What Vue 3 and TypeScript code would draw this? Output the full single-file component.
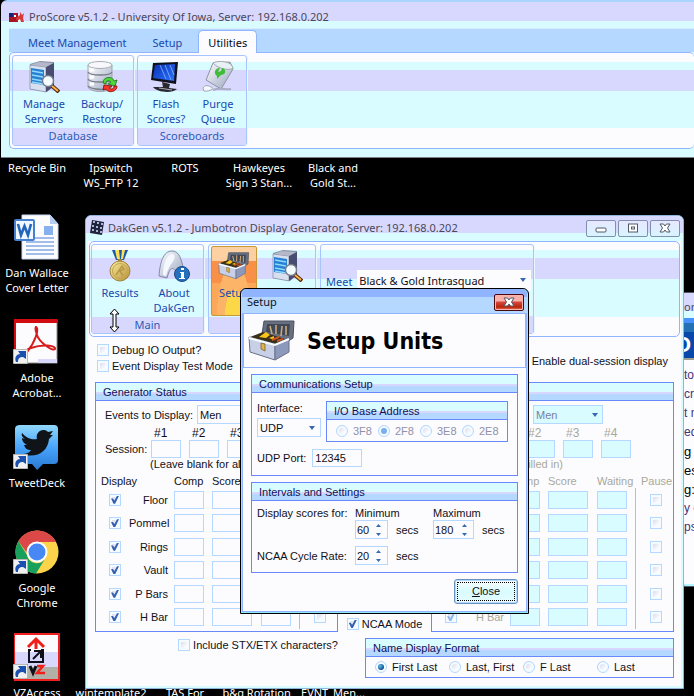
<script setup lang="ts">
import { reactive, ref } from 'vue'

interface Shortcut { label: string; icon?: string; linked?: boolean }
interface GeneratorPanel {
  id: string
  title: string
  disabled: boolean
  division: string
  note: string
  sessions: string[]
  events: { name: string; shown: boolean; paused: boolean }[]
}

const eventNames = ['Floor', 'Pommel', 'Rings', 'Vault', 'P Bars', 'H Bar']

const shortcuts: Shortcut[] = [
  { label: 'Recycle Bin' },
  { label: 'Ipswitch WS_FTP 12' },
  { label: 'ROTS' },
  { label: 'Hawkeyes Sign 3 Stan...' },
  { label: 'Black and Gold St...' },
  { label: 'Dan Wallace Cover Letter', icon: 'word' },
  { label: '' }, { label: '' }, { label: '' }, { label: '' },
  { label: 'Adobe Acrobat...', icon: 'acrobat', linked: true },
  { label: 'Calculator' }, { label: '' }, { label: '' }, { label: '' },
  { label: 'TweetDeck', icon: 'tweet', linked: true },
  { label: '' }, { label: '' }, { label: '' }, { label: '' },
  { label: 'Google Chrome', icon: 'chrome', linked: true },
  { label: '' }, { label: '' }, { label: '' }, { label: '' },
  { label: 'VZAccess', icon: 'vz', linked: true },
  { label: 'wintemplate2' },
  { label: 'TAS For' },
  { label: 'b&g Rotation_' },
  { label: 'EVNT_Men...' },
]

const tabs = ['Meet Management', 'Setup', 'Utilities']
const activeTab = ref('Utilities')

const proGroups = [
  { name: 'Database', items: [{ text: 'Manage Servers', icon: 'server' }, { text: 'Backup/ Restore', icon: 'database' }] },
  { name: 'Scoreboards', items: [{ text: 'Flash Scores?', icon: 'monitor' }, { text: 'Purge Queue', icon: 'bin' }] },
]

const panels = reactive<GeneratorPanel[]>([
  {
    id: 'one', title: 'Generator Status', disabled: false, division: 'Men',
    note: '(Leave blank for all)', sessions: ['', '', '', ''],
    events: eventNames.map((name) => ({ name, shown: true, paused: false })),
  },
  {
    id: 'two', title: 'Generator Status', disabled: true, division: 'Men',
    note: '(Ignored unless filled in)', sessions: ['', '', '', ''],
    events: eventNames.map((name) => ({ name, shown: true, paused: false })),
  },
])

const options = reactive({ debug: false, test: false, dual: false, ncaa: true, stx: false })
const nameFormats = ['First Last', 'Last, First', 'F Last', 'Last']
const nameFormat = ref('First Last')

const meet = ref('Black & Gold Intrasquad')
const setup = reactive({ iface: 'UDP', address: '2F8', port: '12345', min: 60, max: 180, cycle: 20 })
const addresses = ['3F8', '2F8', '3E8', '2E8']
const dialogOpen = ref(true)

const pageLines = [
  { text: 'to', tone: 'link' }, { text: 'cr', tone: 'link' }, { text: 't m', tone: 'link' },
  { text: 'ed', tone: 'link' }, { text: 'g', tone: 'strong' }, { text: 'es:', tone: 'strong' },
  { text: 'g:', tone: 'strong' }, { text: 'y c', tone: 'link' }, { text: 'ps', tone: 'link' },
]
</script>

<template>
  <main class="desktop">
    <svg class="symbols" aria-hidden="true">
      <defs>
        <linearGradient id="steel" x1="0" y1="0" x2="1" y2="1">
          <stop offset="0" stop-color="#fff" /><stop offset="1" stop-color="#98a4c0" />
        </linearGradient>
        <linearGradient id="gold" x1="0" y1="0" x2="1" y2="1">
          <stop offset="0" stop-color="#fcf0a0" /><stop offset="1" stop-color="#b48c38" />
        </linearGradient>
        <linearGradient id="screen" x1="0" y1="0" x2="1" y2="1">
          <stop offset="0" stop-color="#0830b4" /><stop offset="1" stop-color="#2c74ff" />
        </linearGradient>
        <linearGradient id="sky" x1="0" y1="0" x2="0" y2="1">
          <stop offset="0" stop-color="#90d8fc" /><stop offset=".5" stop-color="#48a4fc" /><stop offset="1" stop-color="#2878d0" />
        </linearGradient>
        <symbol id="i-server" viewBox="0 0 32 32">
          <path d="M2 3 L12 0 L26 1 L26 25 L19 31 L2 28Z" fill="#8890a8" />
          <path d="M2 4 L18 6 V31 L2 28Z" fill="#d8e0f0" stroke="#707890" stroke-width=".6" />
          <path d="M18 6 L26 2 V25 L18 31Z" fill="#484c70" />
          <path d="M2 4 L11 1 L25 2 L18 6Z" fill="#b4b8c8" />
          <path d="M3 7 L16 9 V24 L3 22Z" fill="#2880d0" />
          <path d="M4 10 L15 12 M4 14 L15 16 M4 18 L15 20 M4 21 L15 23" stroke="#90d8fc" stroke-width="1.4" />
          <path d="M24 25 L31 31" stroke="#502810" stroke-width="4" />
          <path d="M24 25 L30 30" stroke="#fcb448" stroke-width="2" />
          <circle cx="20" cy="20" r="5.5" fill="#f4fcff" stroke="#787c88" stroke-width="1.4" />
        </symbol>
        <symbol id="i-database" viewBox="0 0 32 32">
          <path d="M2 4 V26 C4 32 24 32 26 26 V4Z" fill="url(#steel)" stroke="#a0a4ac" />
          <ellipse cx="14" cy="4" rx="12" ry="3.5" fill="#f8f8fc" stroke="#a8acb4" />
          <path d="M2 11 C4 15 24 15 26 11 M2 18 C4 22 24 22 26 18 M2 25 C4 28 16 29 18 28" fill="none" stroke="#787c88" stroke-width="1.3" />
          <path d="M4 9 H8 M4 16 H8 M4 23 H8" stroke="#fff" stroke-width="3" />
          <path d="M17 22 C17 15 27 15 28 20 L31 19 L29 25 L22 23 L25 21 C23 19 20 19 20 23Z" fill="#50d838" stroke="#187018" stroke-width=".8" />
          <path d="M31 25 C31 32 21 32 20 28 L17 29 L18 24 L26 25 L23 27 C25 29 28 28 28 25Z" fill="#f43828" stroke="#800808" stroke-width=".8" />
        </symbol>
        <symbol id="i-monitor" viewBox="0 0 32 32">
          <path d="M3 2 L28 1 L26 23 L1 19Z" fill="#10101c" />
          <path d="M5 4 L25 3 L24 20 L3 17Z" fill="url(#screen)" />
          <path d="M10 4 L16 18 M15 4 L21 19 M20 4 L24 14" stroke="#88b8ff" stroke-width=".8" />
          <path d="M12 21 L20 23 L19 27 L27 28 C22 33 6 31 3 26 L13 26Z" fill="#282830" />
          <path d="M9 27 L22 29" stroke="#a8acb8" />
        </symbol>
        <symbol id="i-bin" viewBox="0 0 32 32">
          <path d="M11 2 L28 1 L31 8 L19 28 L4 19Z" fill="url(#steel)" stroke="#8c949c" />
          <path d="M11 2 C16 -1 30 0 31 7 C28 10 16 8 11 2Z" fill="#e8f0f4" stroke="#a0a8b0" />
          <path d="M18 7 C13 7 11 12 15 15 L15 18 L19 14 C24 14 25 8 20 7 L19 10 L16 11Z" fill="#40bc38" />
          <path d="M1 27 C3 23 7 25 9 26 C13 27 8 31 2 30Z" fill="#f4f8fc" stroke="#a0a8b0" />
          <path d="M11 29 C18 26 23 29 29 28" fill="none" stroke="#a8acc4" stroke-width="2" />
        </symbol>
        <symbol id="i-medal" viewBox="0 0 32 32">
          <path d="M8 0 H24 L20 10 H12Z" fill="#1c58a8" /><path d="M11 0 H15 L16 9 H13Z M18 0 H21 L19 9 H17Z" fill="#fce058" />
          <path d="M14 9 H18 V14 H14Z" fill="#a88838" />
          <circle cx="16" cy="21" r="10" fill="url(#gold)" stroke="#a08440" />
          <circle cx="16" cy="21" r="7.5" fill="none" stroke="#c8a450" />
          <path d="M12 25 L18 16 L20 19 L16 21 L19 26" fill="none" stroke="#b89848" stroke-width="1.5" />
        </symbol>
        <symbol id="i-info" viewBox="0 0 32 32">
          <path d="M1 26 C2 13 5 1 14 1 C22 1 23 10 26 20 L19 23 C15 16 12 17 9 28Z" fill="url(#steel)" stroke="#8088a8" />
          <path d="M5 25 C5 14 9 4 14 4 C18 4 17 9 14 13 C11 16 9 22 8 26Z" fill="#f4f8ff" />
          <circle cx="24" cy="24" r="7.5" fill="#2470bc" stroke="#184888" />
          <path d="M22 22 H26 V28 H27 V29 H21 V28 H23 V23 H22Z M23 18 H26 V20 H23Z" fill="#fff" />
        </symbol>
        <symbol id="i-toolbox" viewBox="0 0 48 42">
          <path d="M16 1 L46 1 L45 18 L39 22 L14 14Z" fill="#687080" stroke="#485060" />
          <path d="M19 4 L42 4 L41 16 L18 12Z" fill="#404858" />
          <path d="M22 6 L24 14 M28 5 V14 M34 6 L33 16 M38 6 V15" stroke="#c8a878" stroke-width="1.6" />
          <path d="M2 17 L15 12 L40 20 L28 26Z" fill="#383018" />
          <path d="M11 17 L18 12 L22 15 L18 18Z M21 18 L26 16 V20Z" fill="#fcc418" />
          <path d="M24 20 L31 17 M29 21 L35 19" stroke="#c85828" stroke-width="2" />
          <path d="M1 17 L27 24 V40 L2 32Z" fill="#c8d0e8" stroke="#687088" />
          <path d="M27 24 L41 18 V32 L27 40Z" fill="#8c98bc" stroke="#687088" />
          <path d="M1 18 L27 25 L41 19" fill="none" stroke="#f8fcff" stroke-width="2" />
          <path d="M13 23 L17 24 V31 L13 29Z" fill="#dcb450" stroke="#806020" stroke-width=".8" />
        </symbol>
        <symbol id="i-word" viewBox="0 0 48 48">
          <path d="M8 2 H36 L44 11 V46 H8Z" fill="#fcfcff" stroke="#c8d8f4" /><path d="M36 2 V11 H44Z" fill="#b4ccf0" />
          <path d="M12 29 H40 M12 33 H40 M12 37 H40 M12 41 H40" stroke="#84a8e4" stroke-width="1.5" />
          <rect x="30" y="13" width="9" height="9" fill="#88b0ec" />
          <path d="M12 25 H40" stroke="#84a8e4" stroke-width="1.5" />
          <rect x="1" y="7" width="19" height="20" rx="1" fill="#f0f8ff" stroke="#4880d0" stroke-width="2" />
          <path d="M4 11 L7 22 L10.500 13 L14 22 L17 11" fill="none" stroke="#2464bc" stroke-width="2.6" />
        </symbol>
        <symbol id="i-acrobat" viewBox="0 0 48 48">
          <rect x="1" y="2" width="42" height="43" fill="#fcfcff" stroke="#8c8c8c" /><path d="M0 1 H43 V5 H2 V40 H0Z" fill="#d00c10" />
          <path d="M24 41 H43 V45 H24Z" fill="#d8d8fc" />
          <path d="M21 9 C27 9 20 26 13 34 C10 38 10 32 17 30 C28 26 42 27 41 31 C39 34 25 24 23 17 C21 11 21 9 23 9" fill="none" stroke="#d81c1c" stroke-width="2" />
        </symbol>
        <symbol id="i-tweet" viewBox="0 0 48 48">
          <path d="M6 2 H40 Q44 2 44 6 V37 Q44 41 40 41 H29 L23 47 L18 41 H6 Q1 41 1 37 V6 Q1 2 6 2Z" fill="url(#sky)" />
          <path d="M8 10 C13 16 19 17 23 16 C21 9 29 4 34 9 L39 8 L36 12 L39 12 L35 16 C34 29 22 36 8 31 C13 31 16 29 17 27 C13 27 11 25 10 22 L13 22 C9 20 8 17 8 15 L11 16 C8 14 7 12 8 10Z" fill="#101418" />
        </symbol>
        <symbol id="i-chrome" viewBox="0 0 48 48">
          <circle cx="23" cy="24" r="21.500" fill="#fcd44c" />
          <path d="M4.400 13.300 A21.500 21.500 0 0 1 42 14 H23 A10 10 0 0 0 13 25Z" fill="#dc4848" />
          <path d="M4.400 13.300 A21.500 21.500 0 0 0 22 45.500 L31 31 A10 10 0 0 1 13 27Z" fill="#18a05c" />
          <circle cx="23" cy="24" r="10.500" fill="#fff" /><circle cx="23" cy="24" r="8.500" fill="#4888f4" />
        </symbol>
        <symbol id="i-vz" viewBox="0 0 48 48">
          <rect x="0" y="1" width="45" height="46" fill="#fcfcff" stroke="#f02020" stroke-width="2" />
          <path d="M1 19 H44 V34 H1Z" fill="#d8d8ff" /><path d="M1 34 H44 V46 H1Z" fill="#b0b0a8" />
          <path d="M22 16 V6 M14 14 L22 6 L30 14" fill="none" stroke="#f02018" stroke-width="3" />
          <path d="M17 17 H15 V29 H29 V17 H27" fill="none" stroke="#101018" stroke-width="2" />
          <path d="M19 26 L26 19 M20 18 H27 V25" fill="none" stroke="#101018" stroke-width="2" />
          <path d="M16 33 L19 40 L22 33" fill="none" stroke="#101018" stroke-width="3" /><path d="M23 33 H29 L23 40 H31" fill="none" stroke="#f02018" stroke-width="2.500" />
        </symbol>
        <symbol id="i-link" viewBox="0 0 15 15">
          <rect width="15" height="15" fill="#f0f0f0" stroke="#808078" />
          <path d="M3 13 C1 8 4 5 7 5 L5 2 H13 V10 L10 8 C7 8 5 9 5 13Z" fill="#1c50b0" />
        </symbol>
        <symbol id="i-pro" viewBox="0 0 16 12">
          <path d="M0 2 H9 V11 H0Z" fill="#a81424" /><path d="M0 2 H4 V6 H0Z" fill="#182478" /><path d="M5 4 H7 V6 H5Z M9 5 H14 V10 H9Z" fill="#fff" />
          <path d="M7 7 L11 4 L11 1 L13 4 L15 2 L14 7 L15 11 H12 L11 8 L8 10Z" fill="#d83838" />
        </symbol>
        <symbol id="i-dak" viewBox="0 0 14 16">
          <path d="M2 0 L14 2 L12 15 L0 13Z" fill="#20243c" />
          <path d="M3 2 H5 M7 3 H9 M11 4 H13 M2 6 H4 M6 7 H8 M10 8 H12 M2 10 H4 M6 11 H8 M10 12 H12" stroke="#a8b4d8" stroke-width="2" />
        </symbol>
        <symbol id="i-x" viewBox="0 0 12 10">
          <path d="M1 1 H4.500 L6 3 L7.500 1 H11 L8.500 5 L11 9 H7.500 L6 7 L4.500 9 H1 L3.500 5Z" fill="#fff" stroke="#505868" />
        </symbol>
        <symbol id="i-spin" viewBox="0 0 7 12">
          <path d="M1 3 L3.500 0 L6 3Z M1 9 L3.500 12 L6 9Z" fill="#3868b4" />
        </symbol>
      </defs>
    </svg>

    <section class="shortcuts" aria-label="Desktop">
      <a v-for="(s, i) in shortcuts" :key="i" class="shortcut" href="#">
        <span class="tile">
          <svg v-if="s.icon" class="tile-art"><use :href="`#i-${s.icon}`" /></svg>
          <svg v-if="s.linked" class="tile-link"><use href="#i-link" /></svg>
        </span>
        <span class="tile-label">{{ s.label }}</span>
      </a>
    </section>

    <section class="browser" aria-label="Browser">
      <div class="browser-title">on</div>
      <div class="browser-banner">O</div>
      <p v-for="(l, i) in pageLines" :key="i" :class="['page-line', l.tone]">{{ l.text }}</p>
    </section>

    <section class="proscore" aria-label="ProScore">
      <header class="pro-title"><svg class="pro-logo"><use href="#i-pro" /></svg>ProScore v5.1.2 - University Of Iowa, Server: 192.168.0.202</header>
      <nav class="tabs">
        <button v-for="t in tabs" :key="t" type="button" :class="['tab', { active: t === activeTab }]" @click="activeTab = t">{{ t }}</button>
      </nav>
      <div class="ribbon pro-ribbon">
        <div v-for="g in proGroups" :key="g.name" class="group">
          <div class="tools">
            <button v-for="b in g.items" :key="b.text" type="button" class="tool">
              <svg class="tool-art"><use :href="`#i-${b.icon}`" /></svg>{{ b.text }}
            </button>
          </div>
          <div class="group-name">{{ g.name }}</div>
        </div>
      </div>
    </section>

    <section class="dakgen" aria-label="DakGen">
      <header class="dak-title">
        <svg class="dak-logo"><use href="#i-dak" /></svg>
        <span class="dak-name">DakGen v5.1.2 - Jumbotron Display Generator, Server: 192.168.0.202</span>
        <button type="button" class="sys" aria-label="Minimize"><svg viewBox="0 0 12 10"><rect x="1" y="5" width="10" height="4" rx="1" fill="#fff" stroke="#505868" /></svg></button>
        <button type="button" class="sys" aria-label="Maximize"><svg viewBox="0 0 12 10"><rect x="1.500" y="1" width="9" height="8" fill="#fff" stroke="#505868" /><rect x="4.500" y="4" width="3" height="2" fill="#fff" stroke="#505868" /></svg></button>
        <button type="button" class="sys" aria-label="Close window"><svg><use href="#i-x" /></svg></button>
      </header>
      <div class="ribbon dak-ribbon">
        <div class="group">
          <div class="tools">
            <button type="button" class="tool"><svg class="tool-art"><use href="#i-medal" /></svg>Results</button>
            <button type="button" class="tool"><svg class="tool-art"><use href="#i-info" /></svg>About DakGen</button>
          </div>
          <div class="group-name">Main</div>
        </div>
        <div class="group">
          <div class="tools">
            <button type="button" class="tool hot" @click="dialogOpen = true"><svg class="tool-art"><use href="#i-toolbox" /></svg>Setup</button>
            <button type="button" class="tool" aria-label="Find server"><svg class="tool-art"><use href="#i-server" /></svg></button>
          </div>
          <div class="group-name"></div>
        </div>
        <div class="group meet-group">
          <div class="meet-row">
            <label for="meet">Meet</label>
            <span class="picker meet-picker">
              <select id="meet" v-model="meet"><option>Black &amp; Gold Intrasquad</option></select><i class="caret"></i>
            </span>
          </div>
          <div class="group-name"></div>
        </div>
      </div>

      <div class="dak-body">
        <div class="options">
          <div class="option-list">
            <label class="check"><input v-model="options.debug" type="checkbox">Debug IO Output?</label>
            <label class="check"><input v-model="options.test" type="checkbox">Event Display Test Mode</label>
          </div>
          <label class="check dual"><input v-model="options.dual" type="checkbox">Enable dual-session display</label>
        </div>

        <div class="generators">
          <template v-for="(p, n) in panels" :key="p.id">
            <label v-if="n === 1" class="check ncaa"><input v-model="options.ncaa" type="checkbox">NCAA Mode</label>
            <fieldset :class="['panel', 'generator', { dim: p.disabled }]" :disabled="p.disabled" :aria-label="p.title">
              <div class="panel-head">{{ p.disabled ? '' : p.title }}</div>
              <div class="division">
                <label :for="`division-${p.id}`">Events to Display:</label>
                <span class="picker">
                  <select :id="`division-${p.id}`" v-model="p.division"><option>Men</option><option>Women</option></select><i class="caret"></i>
                </span>
              </div>
              <div class="sessions">
                <span></span>
                <label v-for="k in 4" :key="k" class="session-no" :for="`session-${p.id}-${k}`">#{{ k }}</label>
                <span>Session:</span>
                <input v-for="k in 4" :id="`session-${p.id}-${k}`" :key="k" v-model="p.sessions[k - 1]" class="box" type="text">
              </div>
              <div class="note">{{ p.note }}</div>
              <table class="events">
                <colgroup><col class="c-show"><col class="c-name"><col class="c-comp"><col class="c-score"><col class="c-wait"><col class="c-pause"></colgroup>
                <thead>
                  <tr><th>Display</th><th></th><th>Comp</th><th>Score</th><th>Waiting</th><th class="pause-head">Pause</th></tr>
                </thead>
                <tbody>
                  <tr v-for="e in p.events" :key="e.name">
                    <td class="show"><input v-model="e.shown" type="checkbox" :aria-label="`Display ${e.name}`"></td>
                    <td class="name">{{ e.name }}</td>
                    <td><input class="box" type="text" :aria-label="`${e.name} competitor`"></td>
                    <td><input class="box wide" type="text" :aria-label="`${e.name} score`"></td>
                    <td class="wait"><input class="box" type="text" :aria-label="`${e.name} waiting`"></td>
                    <td class="pause"><input v-model="e.paused" type="checkbox" :disabled="p.disabled" :aria-label="`Pause ${e.name}`"></td>
                  </tr>
                </tbody>
              </table>
            </fieldset>
          </template>
        </div>

        <div class="footer">
          <label class="check"><input v-model="options.stx" type="checkbox">Include STX/ETX characters?</label>
          <fieldset class="panel formats" aria-label="Name Display Format">
            <div class="panel-head">Name Display Format</div>
            <div class="format-row">
              <label v-for="f in nameFormats" :key="f" class="radio"><input v-model="nameFormat" type="radio" name="format" :value="f">{{ f }}</label>
            </div>
          </fieldset>
        </div>
      </div>
    </section>

    <section v-if="dialogOpen" class="dialog" role="dialog" aria-label="Setup">
      <header class="dialog-title">
        <span>Setup</span>
        <button type="button" class="kill" aria-label="Close dialog" @click="dialogOpen = false"><svg><use href="#i-x" /></svg></button>
      </header>
      <div class="banner"><svg class="banner-art"><use href="#i-toolbox" /></svg><h1>Setup Units</h1></div>
      <div class="dialog-body">
        <fieldset class="panel comms" aria-label="Communications Setup">
          <div class="panel-head">Communications Setup</div>
          <div class="comms-row">
            <div class="iface">
              <label for="iface">Interface:</label>
              <span class="picker">
                <select id="iface" v-model="setup.iface"><option>UDP</option><option>Serial</option></select><i class="caret"></i>
              </span>
            </div>
            <fieldset class="panel base" disabled aria-label="I/O Base Address">
              <div class="panel-head">I/O Base Address</div>
              <div class="base-row">
                <label v-for="a in addresses" :key="a" class="radio"><input v-model="setup.address" type="radio" name="address" :value="a">{{ a }}</label>
              </div>
            </fieldset>
          </div>
          <div class="port"><label for="port">UDP Port:</label><input id="port" v-model="setup.port" class="box" type="text"></div>
        </fieldset>
        <fieldset class="panel intervals" aria-label="Intervals and Settings">
          <div class="panel-head">Intervals and Settings</div>
          <div class="interval-grid">
            <span>Display scores for:</span>
            <label for="min">Minimum</label>
            <label for="max">Maximum</label>
            <span></span>
            <span class="spin-row"><span class="spin"><input id="min" v-model="setup.min" type="number"><svg><use href="#i-spin" /></svg></span>secs</span>
            <span class="spin-row"><span class="spin wide"><input id="max" v-model="setup.max" type="number"><svg><use href="#i-spin" /></svg></span>secs</span>
            <label class="cycle" for="cycle">NCAA Cycle Rate:</label>
            <span class="spin-row cycle"><span class="spin"><input id="cycle" v-model="setup.cycle" type="number"><svg><use href="#i-spin" /></svg></span>secs</span>
          </div>
        </fieldset>
        <button type="button" class="close" @click="dialogOpen = false"><span><u>C</u>lose</span></button>
      </div>
    </section>

    <svg class="pointer" viewBox="0 0 11 25" aria-hidden="true">
      <path d="M5.500 1 L10 6 H7 V19 H10 L5.500 24 L1 19 H4 V6 H1Z" fill="#fff" stroke="#000" />
    </svg>
  </main>
</template>

<style>
body { background: #000; overflow: hidden; }
</style>

<style scoped>
* { box-sizing: border-box; }
.desktop { position: relative; min-height: 100vh; overflow: hidden; background: #000; font: 11px/14px "Liberation Sans", Arial, sans-serif; color: #101018; }
.symbols { position: absolute; width: 0; height: 0; }
button, input, select { font: inherit; color: inherit; margin: 0; }
fieldset { margin: 0; padding: 0; min-width: 0; border: 0; }

/* desktop */
.shortcuts { position: absolute; top: 108px; left: 0; display: grid; grid-template-columns: repeat(5, 74px); grid-auto-rows: 105px; }
.shortcut { display: flex; flex-direction: column; align-items: center; gap: 4px; color: #fff; text-decoration: none; text-align: center; font: 11px/15px "Noto Sans", "Open Sans", sans-serif; }
.tile { position: relative; width: 46px; height: 48px; flex: none; }
.tile-art { width: 48px; height: 48px; display: block; }
.tile-link { position: absolute; left: -1px; bottom: 2px; width: 15px; height: 15px; }
.tile-label { width: 74px; }

.browser { position: absolute; left: 680px; right: -40px; top: 292px; height: 295px; border: 1px solid #505868; border-radius: 6px; background: #fcfcff; padding-left: 3px; box-shadow: inset 0 -2px #b4f4ff; overflow: hidden; }
.browser-title { height: 25px; padding-top: 7px; background: linear-gradient(#d8d8ff 18px, #d8fcff 18px); font: 11px/14px "Noto Sans", sans-serif; color: #484858; }
.browser-banner { height: 42px; background: linear-gradient(#4890fc 5px, #2470b4 5px 14px, #0848a8 14px); border-bottom: 2px solid #a0a090; color: #fff; font: bold 22px/54px "Liberation Sans", sans-serif; text-indent: -10px; overflow: hidden; margin-bottom: 8px; }
.page-line { margin: 0 0 4px; font: 12px/15px "Liberation Sans", sans-serif; color: #483078; white-space: nowrap; }
.page-line.strong { color: #000; font-size: 13px; }

/* ribbons */
.proscore { position: absolute; left: 1px; right: 0; top: 0; padding: 2px 0 8px 8px; border-radius: 6px 0 0 0; border-bottom: 1px solid #808088; background: linear-gradient(#a8d4ff 2px, #d8d8ff 2px 21px, #d8fcff 21px); font: 11px/14px "Noto Sans", "Open Sans", sans-serif; }
.pro-title { display: flex; align-items: center; gap: 4px; height: 26px; padding-top: 3px; color: #484858; }
.pro-logo { width: 16px; height: 12px; flex: none; }
.tabs { display: flex; height: 24px; padding: 1px 0 0 9px; gap: 6px; background: #b4d8ff; border-top: 1px solid #d8ecff; }
.tab { height: 23px; border: 1px solid transparent; border-bottom: 0; border-radius: 5px 5px 0 0; background: none; padding: 2px 9px 0; color: #1848b0; }
.tab.active { background: #fcfcff; border-color: #90b4ff; color: #080810; }
.ribbon { display: flex; gap: 3px; border: 1px solid #90b4ff; border-radius: 5px; font: 11px/15px "Noto Sans", "Open Sans", sans-serif; color: #1848b0; }
.pro-ribbon { border-right: 0; padding: 2px 0 2px 2px; background: linear-gradient(#fcfcff 9px, #d8fcff 9px 17px, #d8d8ff 17px 38px, #d8fcff 38px 75px, #fcfcff 75px); }
.group { display: flex; flex-direction: column; border: 1px solid #a8c4ff; border-radius: 3px; box-shadow: 1px 0 #e8f8ff; }
.tools { display: flex; flex: 1; padding: 1px 2px 0; }
.tool { display: flex; flex-direction: column; align-items: center; width: 58px; height: 70px; padding: 4px 1px 0; border: 0; background: none; text-align: center; line-height: 15px; }
.pro-ribbon .group:nth-child(2) .tool { width: 52px; }
.tool-art { width: 32px; height: 32px; margin-bottom: 3px; flex: none; }
.group-name { height: 17px; margin-top: 1px; line-height: 16px; text-align: center; background: #d8d8ff; color: #2c5cb4; }

.dakgen { position: absolute; left: 85px; right: 10px; top: 215px; border: 1px solid #90b4d8; border-radius: 6px 6px 0 0; background: #fcfcff; box-shadow: inset 0 0 0 2px #d8fcff; }
.dak-title { display: flex; align-items: center; height: 25px; padding: 0 3px 1px 4px; border-radius: 6px 6px 0 0; background: linear-gradient(#d8d8ff 17px, #d8fcff 17px); font: 11px/14px "Noto Sans", "Open Sans", sans-serif; color: #484858; }
.dak-logo { width: 14px; height: 16px; margin-right: 4px; flex: none; }
.dak-name { flex: 1; white-space: nowrap; }
.sys { display: grid; place-items: center; width: 30px; height: 17px; margin-left: 2px; border: 1px solid #8090b0; border-radius: 2px; background: linear-gradient(#e8e8ff, #d8f4ff); padding: 0; }
.sys svg, .kill svg { width: 12px; height: 10px; }
.dak-ribbon { height: 96px; margin: 0 3px; padding: 2px 2px 2px 1px; gap: 4px; background: linear-gradient(#fcfcff 8px, #d8fcff 8px 16px, #d8d8ff 16px 37px, #d8fcff 37px 75px, #fcfcff 75px); }
.dak-ribbon .tool { width: 54px; padding-top: 4px; }
.dak-ribbon .tools { padding: 1px 2px 0 1px; }
.dak-ribbon .group:nth-child(2) .tool { width: 46px; }
.dak-ribbon .group:nth-child(2) .tools { gap: 7px; padding-left: 2px; padding-right: 5px; }
.dak-ribbon .tool.hot { border: 1px solid #c89838; border-radius: 2px; padding-top: 3px; background: radial-gradient(ellipse at 50% 110%, #fcd848 30%, #fcb468 31% 55%, transparent 56%), linear-gradient(#fcd0a0 14px, #f89048 14px 36px, #fca858 36px); }
.meet-group { flex: 0 1 214px; }
.meet-row { display: flex; align-items: center; gap: 5px; flex: 1; padding: 0 2px 0 5px; }
.meet-row label { padding-top: 2px; }
.meet-picker { flex: 1; color: #101018; }
.dakgen .meet-picker select { height: 21px; border-color: #fcfcff; padding-left: 1px; }

/* fields */
.picker, .spin { display: grid; align-items: center; }
.picker select, .picker .caret { grid-area: 1 / 1; }
.picker select { appearance: none; width: 100%; height: 19px; border: 1px solid #b4d8ff; border-radius: 0; background: #fcfcff; padding: 0 16px 0 2px; opacity: 1; }
.caret { justify-self: end; margin-right: 5px; border: 3px solid transparent; border-top: 4px solid #3868b4; border-bottom: 0; pointer-events: none; }
.box { display: block; width: 30px; height: 18px; border: 1px solid #b4d8ff; background: #fcfcff; padding: 0 2px; }
.box.wide { width: 40px; }
.check, .radio { display: flex; align-items: center; gap: 3px; white-space: nowrap; }
input[type="checkbox"], input[type="radio"] { appearance: none; display: grid; place-items: center; flex: none; width: 12px; height: 12px; border: 1px solid #b4d8ff; background: linear-gradient(135deg, #d0d0e8, #fcfcff 70%); box-shadow: inset 0 0 0 2px #f4fcff; }
input[type="checkbox"]:checked::before { content: ""; width: 8px; height: 8px; background: #3860b0; clip-path: polygon(0 35%, 25% 35%, 42% 60%, 75% 0, 100% 0, 52% 100%, 32% 100%); }
input[type="radio"] { border-radius: 50%; }
input[type="radio"]:checked::before { content: ""; width: 6px; height: 6px; border-radius: 50%; background: radial-gradient(circle at 35% 35%, #58c4e8, #184890 70%); }
input[type="radio"]:disabled:checked::before { background: #78b0f0; }

.panel { border: 1px solid #6888fc; background: #fcfcff; }
.panel-head { height: 18px; padding-left: 7px; line-height: 18px; border-bottom: 1px solid #6888fc; background: linear-gradient(#d8fcff 9px, #d8d8ff 9px 11px, #b4d8ff 11px); color: #101058; }

/* DakGen body */
.dak-body { padding: 5px 9px 10px; }
.options { display: flex; justify-content: space-between; padding: 0 6px 0 2px; }
.option-list .check { height: 16px; }
.dual { margin-top: 6px; }
.generators { display: flex; justify-content: space-between; margin-top: 8px; }
.generator { width: 243px; height: 250px; }
.division { display: flex; align-items: center; padding: 4px 0 0 9px; }
.division label { width: 92px; }
.division .picker { width: 70px; }
.sessions { display: grid; grid-template-columns: 38px repeat(4, 30px); column-gap: 8px; align-items: center; padding: 2px 0 0 9px; white-space: nowrap; }
.session-no { padding-left: 3px; font-size: 12px; }
.note { width: 168px; padding-left: 54px; line-height: 12px; white-space: nowrap; }
.dim .note { width: auto; padding: 0; margin-right: 110px; text-align: right; }
.events { table-layout: fixed; width: 241px; border-collapse: collapse; margin-top: 4px; }
.events th, .events td { padding: 0; }
.events th { height: 14px; font-weight: normal; text-align: left; white-space: nowrap; }
.events tbody { height: 141px; }
.events .c-show { width: 33px; }
.events .c-name { width: 45px; }
.events .c-comp { width: 38px; }
.events .c-score { width: 49px; }
.events .c-wait { width: 38px; }
.events th:first-child { padding-left: 5px; }
.events .show { padding-left: 13px; }
.events .name { text-align: right; padding-right: 6px; white-space: nowrap; }
.wait { border-right: 1px solid #c0c0a8; }
.events .pause { padding-left: 14px; }
.events .pause-head { padding-left: 6px; }
.generator.dim { color: #a8a898; }
.dim .box, .dim select { background: #d8fcff; color: #7880a0; }
.dim input[type="checkbox"]::before { background: #90b8e8; }
.ncaa { align-self: flex-end; padding-bottom: 1px; }
.footer { display: flex; align-items: flex-start; justify-content: flex-end; gap: 27px; margin-top: 6px; }
.formats { width: 309px; height: 40px; }
.format-row { display: grid; grid-template-columns: repeat(4, 74px); padding: 1px 0 0 9px; height: 20px; }
.format-row .radio { gap: 5px; height: 18px; }

/* dialog */
.dialog { position: absolute; left: 240px; top: 288px; width: 289px; border: 1px solid #000; border-radius: 6px 6px 0 0; background: #90b4ff; padding: 0 2px 2px; box-shadow: inset 0 0 0 1px #90e8ff; }
.dialog-title { display: flex; align-items: center; justify-content: space-between; height: 24px; margin: 0 -1px; padding: 2px 3px 0 5px; border-radius: 5px 5px 0 0; background: linear-gradient(#90b4ff 8px, #b4d8ff 8px); font: 11px/14px "Noto Sans", "Open Sans", sans-serif; }
.kill { display: grid; place-items: center; width: 30px; height: 17px; padding: 0; border: 1px solid #480810; border-radius: 2px; background: linear-gradient(#f8b0a8 6px, #d84840 7px, #b42408 12px, #f07868); box-shadow: inset 0 0 0 1px #fcb4b0; }
.banner { display: flex; align-items: center; gap: 11px; height: 55px; padding: 0 4px; border: 1px solid #90b4ff; background: #fcfcff; }
.banner-art { width: 48px; height: 42px; }
.banner h1 { margin: 0; font: bold 23px/30px "DejaVu Sans Condensed", "DejaVu Sans", sans-serif; color: #000; }
.dialog-body { display: flex; flex-direction: column; background: #fcfcff; padding: 6px 8px 7px; }
.comms { height: 102px; }
.comms-row { display: flex; justify-content: space-between; padding: 8px 9px 0 5px; }
.iface { width: 64px; display: flex; flex-direction: column; gap: 3px; }
.iface .caret { margin-right: 6px; }
.base { width: 182px; height: 41px; }
.base-row { display: grid; grid-template-columns: repeat(4, 42px); padding: 4px 0 0 9px; color: #9090a8; }
.base-row .radio { gap: 5px; }
.port { display: flex; align-items: center; gap: 6px; padding: 7px 0 0 5px; }
.port .box { width: 50px; }
.intervals { height: 91px; margin-top: 6px; }
.interval-grid { display: grid; grid-template-columns: 98px 78px auto; padding: 5px 0 0 5px; align-items: center; }
.spin-row { display: flex; align-items: center; gap: 8px; }
.spin { grid-template-columns: 1fr 7px; width: 33px; height: 19px; padding-right: 5px; border: 1px solid #b4d8ff; background: #fcfcff; }
.spin.wide { width: 41px; }
.spin input { appearance: textfield; width: 100%; min-width: 0; border: 0; padding: 0 0 0 1px; background: none; }
.spin input::-webkit-inner-spin-button { appearance: none; margin: 0; }
.spin svg { width: 7px; height: 12px; }
.cycle { margin-top: 7px; }
.close { align-self: flex-end; width: 64px; height: 25px; margin-top: 6px; padding: 2px; border: 1px solid #6890c0; border-radius: 3px; box-shadow: inset 0 0 0 1px #b4d8ff; background: linear-gradient(#fcfcff, #d8fcff 50%, #e8fcff); }
.close span { display: block; border: 1px dotted #000; line-height: 17px; }

.pointer { position: absolute; left: 109px; top: 308px; width: 11px; height: 25px; }
</style>
